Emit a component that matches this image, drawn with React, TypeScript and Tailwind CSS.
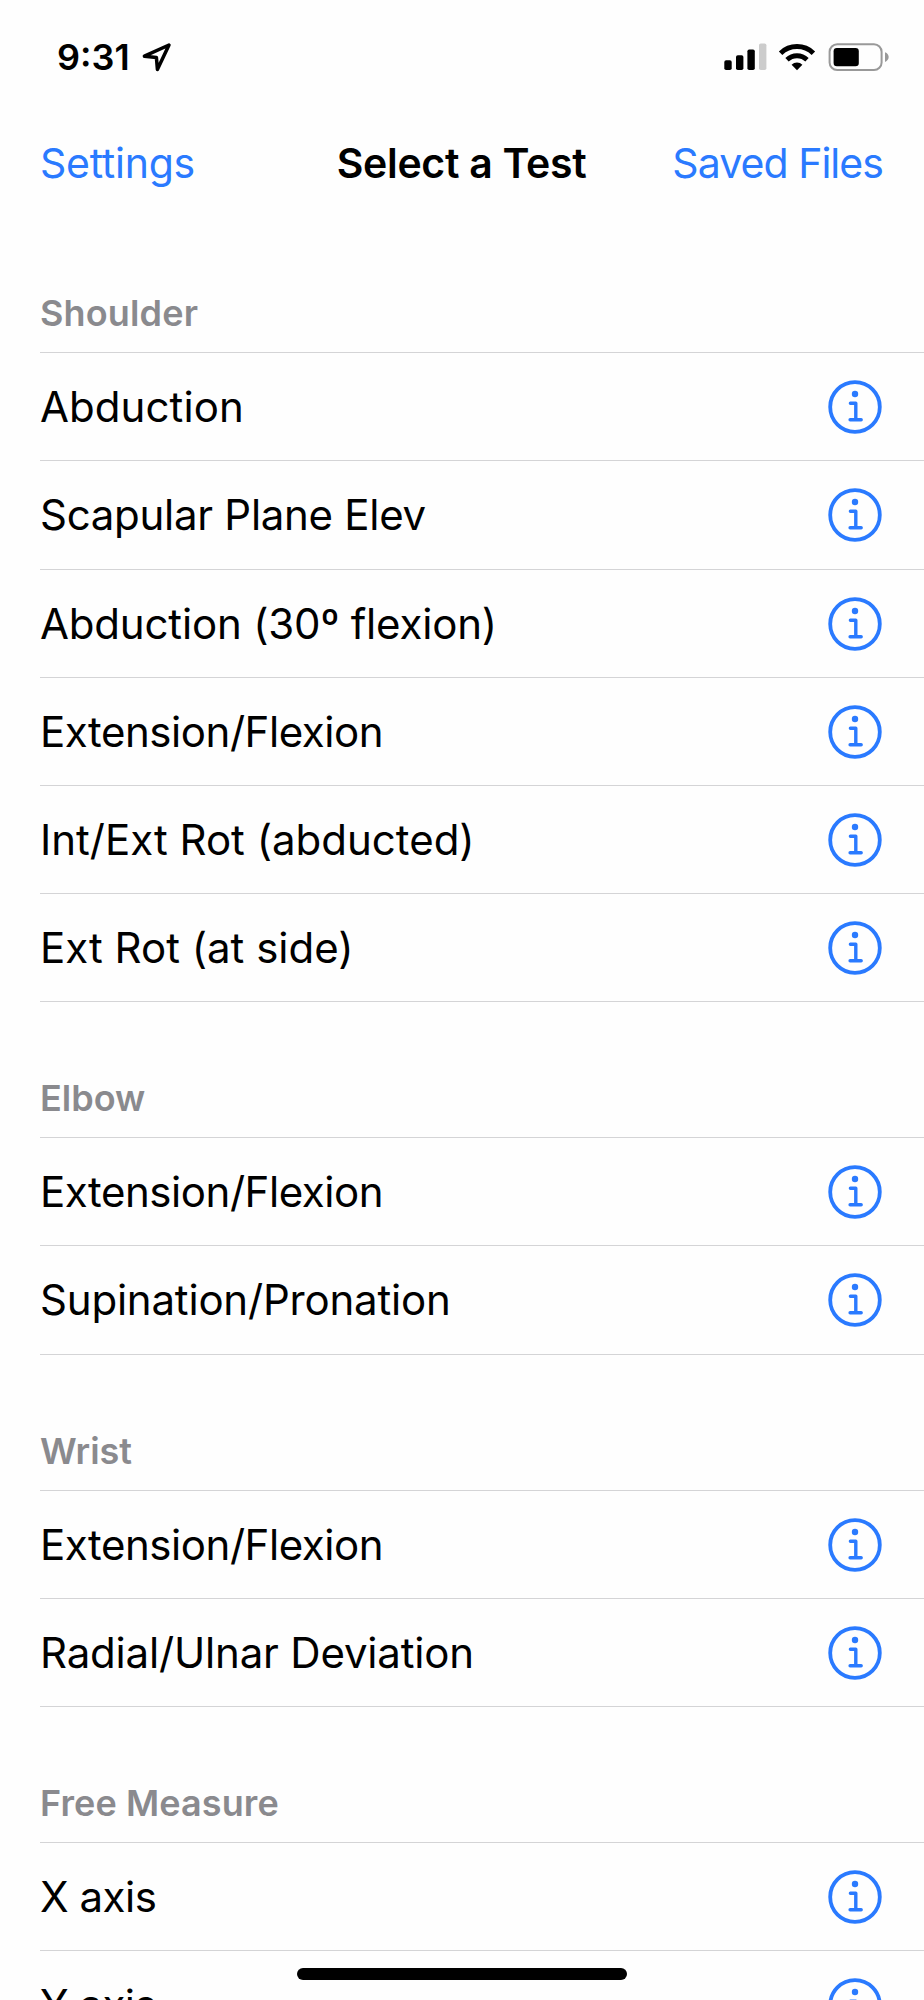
type Test = { name: string; tracking: string };
type Section = { title: string; tracking: string; tests: Test[] };

const sections: Section[] = [
	{
		title: "Shoulder",
		tracking: "tracking-[0.15px]",
		tests: [
			{ name: "Abduction", tracking: "tracking-[0.07px]" },
			{ name: "Scapular Plane Elev", tracking: "tracking-[-0.28px]" },
			{ name: "Abduction (30º flexion)", tracking: "tracking-[-0.18px]" },
			{ name: "Extension/Flexion", tracking: "tracking-[-0.45px]" },
			{ name: "Int/Ext Rot (abducted)", tracking: "tracking-normal" },
			{ name: "Ext Rot (at side)", tracking: "tracking-normal" },
		],
	},
	{
		title: "Elbow",
		tracking: "tracking-normal",
		tests: [
			{ name: "Extension/Flexion", tracking: "tracking-[-0.45px]" },
			{ name: "Supination/Pronation", tracking: "tracking-[-0.2px]" },
		],
	},
	{
		title: "Wrist",
		tracking: "tracking-normal",
		tests: [
			{ name: "Extension/Flexion", tracking: "tracking-[-0.45px]" },
			{ name: "Radial/Ulnar Deviation", tracking: "tracking-[-0.18px]" },
		],
	},
	{
		title: "Free Measure",
		tracking: "tracking-[0.1px]",
		tests: [
			{ name: "X axis", tracking: "tracking-[-0.5px]" },
			{ name: "Y axis", tracking: "tracking-[-0.5px]" },
		],
	},
];

function LocationIcon() {
	return (
		<svg width="30" height="30" viewBox="0 0 30 30" fill="none" stroke="#000" strokeWidth="3.5" strokeLinejoin="round">
			<path d="M27 3 2.4 14.2 14.4 15.4 15.4 27.4Z" />
		</svg>
	);
}

function SignalIcon() {
	return (
		<svg width="43" height="28" viewBox="0 0 43 28">
			<rect x="0.3" y="17.2" width="7.4" height="9.8" rx="1.8" />
			<rect x="12" y="12.2" width="7.4" height="14.8" rx="1.8" />
			<rect x="23.4" y="6.4" width="7.4" height="20.6" rx="1.8" />
			<rect x="35" y="0.4" width="7.4" height="26.6" rx="1.8" fill="#ccc" />
		</svg>
	);
}

function WifiIcon() {
	return (
		<svg width="38" height="28" viewBox="0 0 38 28">
			<path d="M2.6 10.2a23.6 23.6 0 0 1 32.8 0" fill="none" stroke="#000" strokeWidth="5" />
			<path d="M9 16.8a14.4 14.4 0 0 1 20 0" fill="none" stroke="#000" strokeWidth="4.8" />
			<path d="M19 27.2 13.6 21.8a7.7 7.7 0 0 1 10.8 0Z" />
		</svg>
	);
}

function BatteryIcon() {
	return (
		<svg width="61" height="28" viewBox="0 0 61 28">
			<rect x="1.6" y="1.2" width="52" height="25.8" rx="7.6" fill="none" stroke="#999" strokeWidth="2" />
			<rect x="5.6" y="5" width="25.2" height="18.3" rx="3.2" />
			<path d="M57 9.2c4.9 1.8 4.9 8 0 9.8Z" fill="#999" />
		</svg>
	);
}

function InfoIcon() {
	return (
		<svg width="54" height="54" viewBox="-27 -27 54 54" fill="none" stroke="#2a7aff" strokeLinecap="round" strokeLinejoin="round">
			<circle r="24.8" strokeWidth="3.8" />
			<circle cy="-13" r="3.2" fill="#2a7aff" stroke="none" />
			<path d="M-4.6 -3.7H0.8V12.8M-4.9 12.8H6.2" strokeWidth="3.4" />
		</svg>
	);
}

export default function App() {
	return (
		<div className="relative h-[2000px] w-[924px] overflow-hidden bg-[#fefefe] font-['Inter',sans-serif] text-black">
			<header>
				<div className="flex h-[114px] items-center justify-between pl-[57px] pr-[35px]">
					<div className="flex items-center">
						<span className="w-[85px] whitespace-nowrap text-[36px] font-semibold leading-none">9:31</span>
						<LocationIcon />
					</div>
					<div className="flex items-center">
						<SignalIcon />
						<span className="w-[11px]" />
						<WifiIcon />
						<span className="w-3" />
						<BatteryIcon />
					</div>
				</div>
				<nav className="grid h-[98px] grid-cols-3 items-center whitespace-nowrap pl-10 pr-[41px] text-[41px] leading-none text-[#2a7aff]">
					<button className="justify-self-start tracking-[-0.25px]">Settings</button>
					<h1 className="justify-self-center font-semibold tracking-[-0.3px] text-black">Select a Test</h1>
					<button className="justify-self-end tracking-[-0.95px]">Saved Files</button>
				</nav>
			</header>

			<main className="pt-[5.2px]">
				{sections.map((section) => (
					<section key={section.title} className="pl-10">
						<div className="flex h-[136.1px] items-end border-b border-[#d4d4d6] pb-[17px]">
							<h2 className={`text-[36px] font-semibold leading-[44px] text-[#8a8a8e] ${section.tracking}`}>
								{section.title}
							</h2>
						</div>
						{section.tests.map((test) => (
							<div
								key={test.name}
								className="flex h-[108.15px] items-center justify-between border-b border-[#d4d4d6] pr-[42px] pt-px"
							>
								<span className={`whitespace-nowrap text-[42px] leading-none ${test.tracking}`}>{test.name}</span>
								<InfoIcon />
							</div>
						))}
					</section>
				))}
			</main>

			<div className="absolute bottom-5 left-[297px] h-3 w-[330px] rounded-full bg-black" />
		</div>
	);
}
